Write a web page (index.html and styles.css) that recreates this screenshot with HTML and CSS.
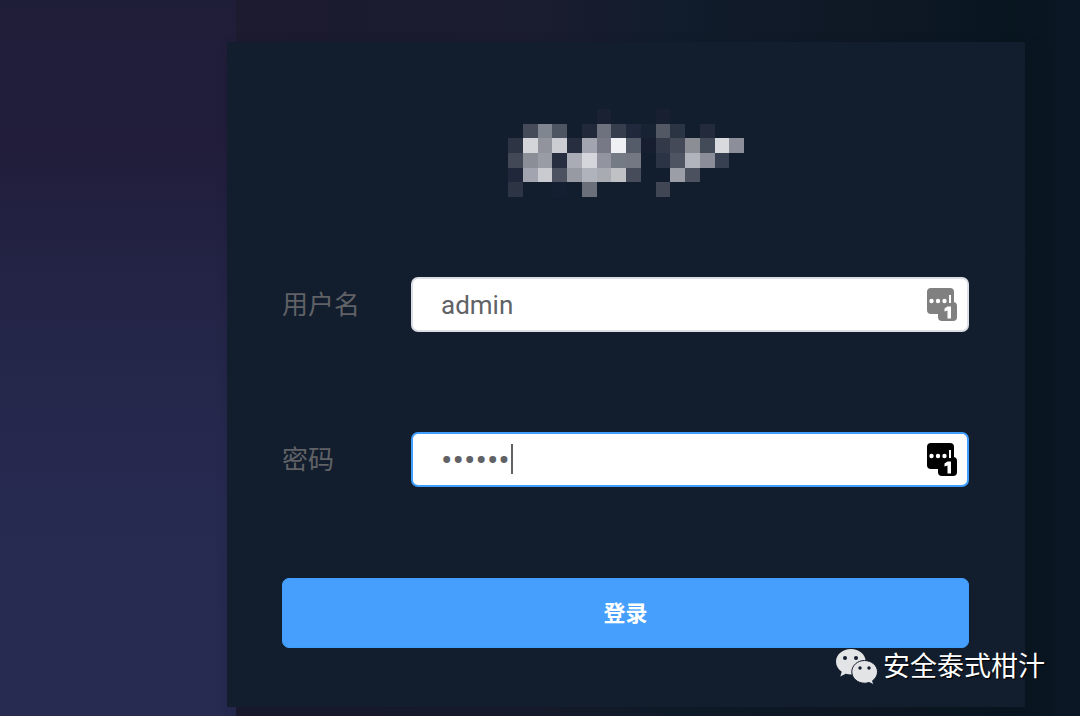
FILE: index.html
```html
<!DOCTYPE html>
<html lang="zh-CN">
<head>
<meta charset="utf-8">
<meta name="viewport" content="width=device-width, initial-scale=1">
<title>登录</title>
<link rel="stylesheet" href="styles.css">
</head>
<body class="page">
<main class="card">
  <svg class="logo" viewBox="0 0 16 6" aria-hidden="true" shape-rendering="crispEdges" preserveAspectRatio="none">
    <path fill="#1a2132" d="M6 0h1v1h-1z"/><path fill="#171f30" d="M10 0h1v1h-1z"/>
    <path fill="#454b59" d="M1 1h1v1h-1z"/><path fill="#80868f" d="M2 1h1v1h-1z"/><path fill="#4d5462" d="M3 1h1v1h-1z"/><path fill="#20283a" d="M5 1h1v1h-1z"/><path fill="#6e727e" d="M6 1h1v1h-1z"/><path fill="#363e4e" d="M7 1h1v1h-1z"/><path fill="#20283b" d="M8 1h1v1h-1z"/><path fill="#172333" d="M9 1h1v1h-1z"/><path fill="#525965" d="M10 1h1v1h-1z"/><path fill="#2b3443" d="M11 1h1v1h-1z"/><path fill="#232a3c" d="M13 1h1v1h-1z"/>
    <path fill="#2d3544" d="M0 2h1v1h-1z"/><path fill="#d3d5d9" d="M1 2h1v1h-1z"/><path fill="#91949c" d="M2 2h1v1h-1z"/><path fill="#cccdd2" d="M3 2h1v1h-1z"/><path fill="#272e40" d="M4 2h1v1h-1z"/><path fill="#a2a5af" d="M5 2h1v1h-1z"/><path fill="#777986" d="M6 2h1v1h-1z"/><path fill="#eff0f3" d="M7 2h1v1h-1z"/><path fill="#555c69" d="M8 2h1v1h-1z"/><path fill="#171e30" d="M9 2h1v1h-1z"/><path fill="#323a49" d="M10 2h1v1h-1z"/><path fill="#444a58" d="M11 2h1v1h-1z"/><path fill="#8b8e95" d="M12 2h1v1h-1z"/><path fill="#434b58" d="M13 2h1v1h-1z"/><path fill="#d9dade" d="M14 2h1v1h-1z"/><path fill="#8c8f9a" d="M15 2h1v1h-1z"/>
    <path fill="#434856" d="M0 3h1v1h-1z"/><path fill="#8b8e96" d="M1 3h1v1h-1z"/><path fill="#999ca5" d="M2 3h1v1h-1z"/><path fill="#262e40" d="M3 3h1v1h-1z"/><path fill="#a9acb5" d="M4 3h1v1h-1z"/><path fill="#d5d6db" d="M5 3h1v1h-1z"/><path fill="#92959f" d="M6 3h1v1h-1z"/><path fill="#757b85" d="M7 3h1v1h-1z"/><path fill="#737883" d="M8 3h1v1h-1z"/><path fill="#2b3444" d="M10 3h1v1h-1z"/><path fill="#4f5462" d="M11 3h1v1h-1z"/><path fill="#b1b3bd" d="M12 3h1v1h-1z"/><path fill="#8b8e99" d="M13 3h1v1h-1z"/><path fill="#374050" d="M14 3h1v1h-1z"/>
    <path fill="#20273a" d="M0 4h1v1h-1z"/><path fill="#a2a4af" d="M1 4h1v1h-1z"/><path fill="#cacbd0" d="M2 4h1v1h-1z"/><path fill="#4c525f" d="M3 4h1v1h-1z"/><path fill="#979aa3" d="M4 4h1v1h-1z"/><path fill="#b0b2bc" d="M5 4h1v1h-1z"/><path fill="#a9abb3" d="M6 4h1v1h-1z"/><path fill="#bfc1c5" d="M7 4h1v1h-1z"/><path fill="#474c5b" d="M8 4h1v1h-1z"/><path fill="#9b9ea6" d="M11 4h1v1h-1z"/><path fill="#4c5160" d="M12 4h1v1h-1z"/>
    <path fill="#2d3544" d="M0 5h1v1h-1z"/><path fill="#142031" d="M3 5h1v1h-1z"/><path fill="#6b6f79" d="M5 5h1v1h-1z"/><path fill="#414654" d="M10 5h1v1h-1z"/>
  </svg>
  <form class="form">
    <div class="row">
      <label class="label" for="username">用户名</label>
      <div class="field">
        <input class="input" id="username" type="text" value="admin">
        <svg class="manager" viewBox="0 0 30 34" aria-hidden="true">
          <rect width="27" height="26" rx="4" fill="currentColor"/>
          <rect x="11" y="14" width="19" height="19" rx="4" fill="currentColor"/>
          <g fill="#fff"><circle cx="4.500" cy="13" r="2.200"/><circle cx="11" cy="13" r="2.200"/><circle cx="17.500" cy="13" r="2.200"/><path d="M22 7h2v8h-2z"/></g>
          <path fill="#fff" d="M20.500 18.500H24V30.500H20.500V22.500L17.500 23.500V20.500z"/>
        </svg>
      </div>
    </div>
    <div class="row">
      <label class="label" for="password">密码</label>
      <div class="field">
        <input class="input input-active" id="password" type="password" value="123456">
        <span class="caret"></span>
        <svg class="manager manager-active" viewBox="0 0 30 34" aria-hidden="true">
          <rect width="27" height="26" rx="4" fill="currentColor"/>
          <rect x="11" y="14" width="19" height="19" rx="4" fill="currentColor"/>
          <g fill="#fff"><circle cx="4.500" cy="13" r="2.200"/><circle cx="11" cy="13" r="2.200"/><circle cx="17.500" cy="13" r="2.200"/><path d="M22 7h2v8h-2z"/></g>
          <path fill="#fff" d="M20.500 18.500H24V30.500H20.500V22.500L17.500 23.500V20.500z"/>
        </svg>
      </div>
    </div>
    <button class="submit" type="button">登录</button>
  </form>
</main>
<div class="watermark">
  <svg class="wechat" viewBox="0 0 42 36" aria-hidden="true">
    <path fill="#e3e4e6" d="M15 0C6.500 0 0 5.600 0 12.700c0 4 2.200 7.600 5.700 10L4.300 27.500 9.700 24.700c1.700.5 3.500.7 5.300.7 8.300 0 14.700-5.600 14.700-12.700S23.300 0 15 0z"/>
    <path fill="#e3e4e6" stroke="#121c2d" d="M28.500 11.500c-7 0-12.700 5-12.700 11.300s5.700 11.400 12.700 11.400c1.600 0 3.200-.2 4.600-.7l4.700 2.300-1.200-4.100c3-2.100 4.900-5.300 4.900-8.900 0-6.300-5.900-11.300-13-11.300z"/>
    <g fill="#121c2d"><circle cx="9" cy="9" r="2"/><circle cx="20" cy="9" r="2"/><circle cx="24" cy="19" r="1.700"/><circle cx="33" cy="19" r="1.700"/></g>
  </svg>
  <span>安全泰式柑汁</span>
</div>
</body>
</html>
```
FILE: styles.css
```css
* {
  box-sizing: border-box;
}

.page {
  position: relative;
  min-height: 100vh;
  margin: 0;
  padding: 42px 55px 9px 227px;
  font-family: Roboto, "Noto Sans CJK SC", sans-serif;
  background:
    linear-gradient(180deg, #1f1e38 0, #211d3b 20%, #232446 40%, #272a50 70%, #272a51 100%) left / 236px 100% no-repeat,
    linear-gradient(90deg, #1c1b30 236px, #1a1c2f 50%, #111c2c 62%, #0f1825 80%, #081620 94%, #0b1725 100%);
}

.card {
  display: flex;
  flex-direction: column;
  align-items: center;
  gap: 80px;
  padding: 67px 56px 59px 55px;
  background: #121d2d;
  box-shadow: 8px 8px 16px rgba(10, 20, 28, 0.3);
}

.logo {
  width: 236px;
  height: 88px;
}

.form {
  display: flex;
  flex-direction: column;
  width: 100%;
}

.row {
  display: flex;
  align-items: center;
  margin-bottom: 100px;
}

.row:nth-child(2) {
  margin-bottom: 91px;
}

.label {
  flex: 0 0 129px;
  padding-bottom: 4px;
  color: #606266;
  font-size: 26px;
}

.field {
  position: relative;
  flex: 1;
}

.input {
  display: block;
  width: 100%;
  height: 55px;
  padding: 0 56px 0 28px;
  border: 2px solid #dcdfe6;
  border-radius: 7px;
  outline: none;
  background: #fff;
  color: #606266;
  font-family: inherit;
  font-size: 26px;
}

.input-active {
  border-color: #409eff;
  font-size: 34px;
}

.caret {
  position: absolute;
  top: 12px;
  left: 100px;
  width: 2px;
  height: 30px;
  background: #606266;
}

.manager {
  position: absolute;
  top: 11px;
  right: 12px;
  width: 30px;
  height: 34px;
  color: #808080;
}

.manager-active {
  color: #000;
}

.submit {
  height: 70px;
  padding: 0 0 4px;
  border: 1px solid #409eff;
  border-radius: 7px;
  background: #469ffd;
  color: #fff;
  font-family: inherit;
  font-size: 22px;
  font-weight: 700;
}

.watermark {
  position: absolute;
  right: 35px;
  bottom: 31px;
  display: flex;
  align-items: center;
  gap: 5px;
  color: #fff;
  font-size: 27px;
  line-height: 36px;
  text-shadow: 1px 1px 1px #000;
}

.wechat {
  width: 42px;
  height: 36px;
}
```
